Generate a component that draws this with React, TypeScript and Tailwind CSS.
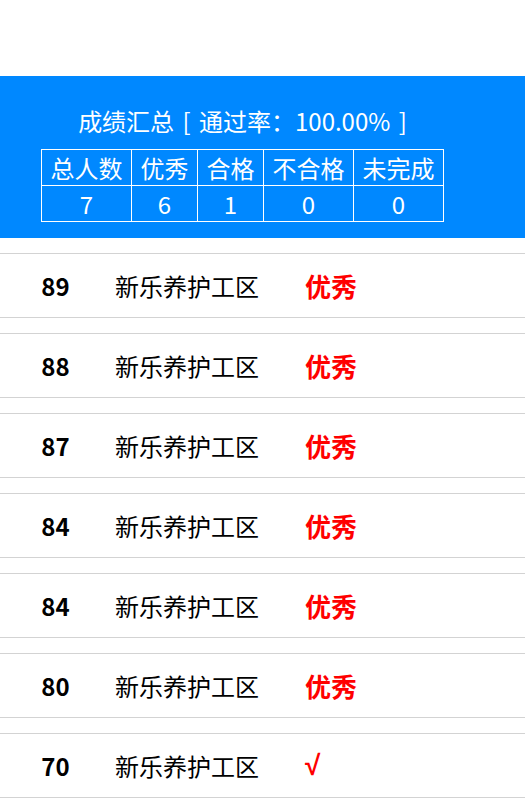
import React from 'react';

const summary = [
  { label: '总人数', value: 7 },
  { label: '优秀', value: 6 },
  { label: '合格', value: 1 },
  { label: '不合格', value: 0 },
  { label: '未完成', value: 0 },
];

const records = [
  { score: 89, area: '新乐养护工区', result: '优秀' },
  { score: 88, area: '新乐养护工区', result: '优秀' },
  { score: 87, area: '新乐养护工区', result: '优秀' },
  { score: 84, area: '新乐养护工区', result: '优秀' },
  { score: 84, area: '新乐养护工区', result: '优秀' },
  { score: 80, area: '新乐养护工区', result: '优秀' },
  { score: 70, area: '新乐养护工区', result: '√' },
];

export default function App() {
  return (
    <main className="min-h-screen bg-white pt-[76px] font-['Noto_Sans_CJK_SC',sans-serif]">
      <section className="bg-[#0088ff] pt-[27px] pb-[16px] pr-10 text-white">
        <h2 className="text-center text-[24px] leading-[36px] [word-spacing:3px]">成绩汇总 [ 通过率：100.00% ]</h2>
        <table className="mx-auto mt-[10px] border-collapse text-center text-[24px] leading-[35px]">
          <tbody>
            <tr>
              {summary.map((s) => (
                <td key={s.label} className="border border-white px-[8.5px] font-normal">
                  {s.label}
                </td>
              ))}
            </tr>
            <tr>
              {summary.map((s) => (
                <td key={s.label} className="border border-white px-[8.5px]">
                  {s.value}
                </td>
              ))}
            </tr>
          </tbody>
        </table>
      </section>

      <ul>
        {records.map((r, i) => (
          <li key={i} className="mt-[15px] flex h-[65px] items-center border-y border-[#d3d3d3]">
            <span className="w-[111px] text-center text-[24px] font-bold text-black">{r.score}</span>
            <span className="ml-[4px] w-[190px] text-[24px] text-black">{r.area}</span>
            {r.result === '√' ? (
              <span className="font-['Liberation_Sans',sans-serif] text-[28px] font-bold text-[#ff0000]">√</span>
            ) : (
              <span className="text-[26px] font-bold text-[#ff0000]">{r.result}</span>
            )}
          </li>
        ))}
      </ul>
    </main>
  );
}
